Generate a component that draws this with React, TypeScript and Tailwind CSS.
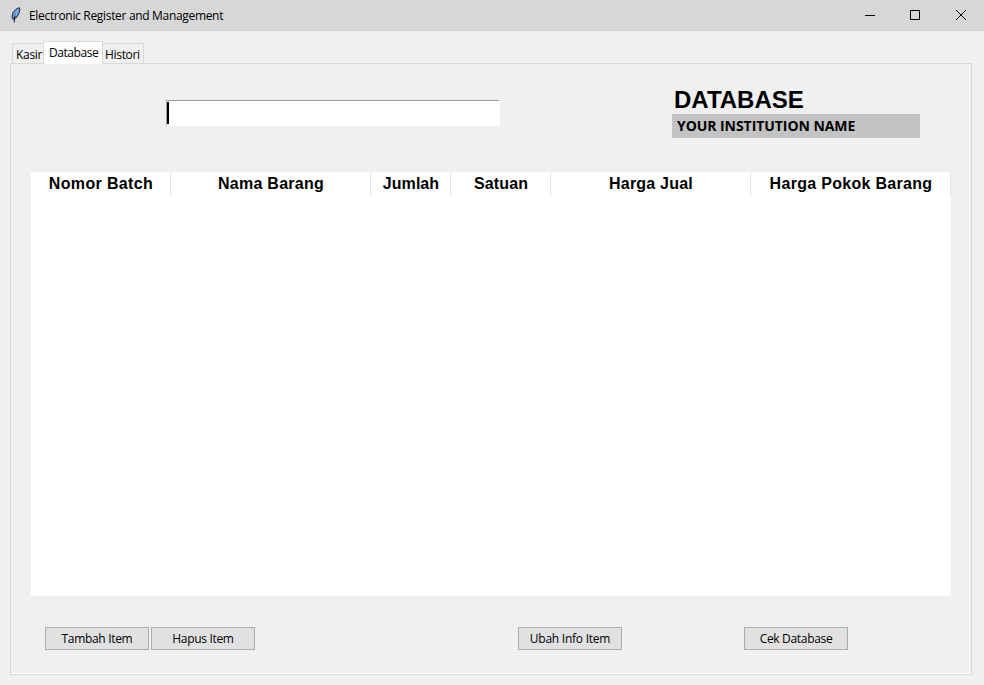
import React from "react";

const columns = [
  { label: "Nomor Batch", width: "w-[140px]", spacing: "tracking-[0.35px]" },
  { label: "Nama Barang", width: "w-[200px]", spacing: "tracking-[0.25px]" },
  { label: "Jumlah", width: "w-[80px]", spacing: "tracking-[0.05px]" },
  { label: "Satuan", width: "w-[100px]", spacing: "tracking-[0.15px]" },
  { label: "Harga Jual", width: "w-[200px]", spacing: "tracking-[0.2px]" },
  { label: "Harga Pokok Barang", width: "w-[200px]", spacing: "tracking-[0.3px]" },
];

function Feather() {
  return (
    <svg width="10" height="16" viewBox="0 0 10 16" className="mt-[7px] ml-[11px] shrink-0">
      <path d="M8.2 0.6 L5 2.2 L2.2 5.2 L1 9 L1.4 11.8 L3.2 12.3 L5.8 10.3 L7.9 6.5 L9 2.2 Z" fill="#5c96dc" stroke="#1a2530" strokeWidth="0.9" />
      <path d="M4.6 7.5 L3.2 12 L3.3 15.5" fill="none" stroke="#101418" strokeWidth="1" />
      <path d="M7.2 2.6 L5.4 6.4 L4.6 9" fill="none" stroke="#8fc0f5" strokeWidth="1.2" />
    </svg>
  );
}

function Button({ children, className = "" }: { children: React.ReactNode; className?: string }) {
  return (
    <button className={`h-[23px] w-[104px] shrink-0 border border-[#adadad] bg-[#e1e1e1] text-center leading-[22px] whitespace-nowrap ${className}`}>
      {children}
    </button>
  );
}

export default function App() {
  return (
    <div className="flex h-[685px] w-[984px] flex-col overflow-hidden bg-[#f0f0f0] font-['Open_Sans','Noto_Sans',sans-serif] text-[12px] tracking-[-0.32px] text-black">
      <header className="flex h-[31px] shrink-0 bg-[#d7d7d7]">
        <Feather />
        <span className="ml-[8px] leading-[32px] whitespace-nowrap">Electronic Register and Management</span>
        <svg width="138" height="31" viewBox="0 0 138 31" className="ml-auto" fill="none" stroke="#000" shapeRendering="crispEdges">
          <path d="M19 15.5H29" />
          <path d="M64.5 10.5h9v9h-9z" />
          <path d="M110 10l10 10M120 10l-10 10" shapeRendering="auto" />
        </svg>
      </header>

      <nav className="ml-[12px] flex h-[33px] shrink-0 items-end">
        <div className="h-[21px] w-[31px] border border-r-0 border-[#d9d9d9] pl-[3px] leading-[22px]">Kasir</div>
        <div className="z-10 h-[23px] w-[60px] border border-b-0 border-[#d9d9d9] bg-white pl-[5px] leading-[22px] tracking-[-0.45px]">Database</div>
        <div className="h-[21px] w-[41px] border border-l-0 border-[#d9d9d9] pl-[2px] leading-[22px]">Histori</div>
      </nav>

      <main className="-mt-px ml-[10px] flex h-[612px] w-[962px] shrink-0 flex-col border border-[#d9d9d9]">
        <section className="flex h-[108px] shrink-0 items-start">
          <div className="mt-[36px] ml-[155px] h-[26px] w-[334px] border border-t-[#a0a0a0] border-r-white border-b-white border-l-[#a0a0a0] bg-white pt-px">
            <div className="h-[22px] w-[2px] bg-black" />
          </div>
          <div className="mt-[22px] ml-[172px] w-[248px]">
            <h1 className="h-[28px] pl-[2px] font-['Liberation_Sans',sans-serif] text-[24px] leading-[28px] font-bold tracking-[0px]">DATABASE</h1>
            <div className="h-[24px] bg-[#c3c3c3] pl-[5px] text-[14px] leading-[24px] font-bold tracking-[-0.06px] whitespace-nowrap">YOUR INSTITUTION NAME</div>
          </div>
        </section>

        <section className="ml-[20px] h-[424px] w-[920px] shrink-0 bg-white">
          <div className="flex">
            {columns.map((c) => (
              <div key={c.label} className={`${c.width} ${c.spacing} h-[24px] border-r border-[#e5e5e5] pl-px text-center font-['Liberation_Sans',sans-serif] text-[16px] leading-[23px] font-bold whitespace-nowrap`}>
                {c.label}
              </div>
            ))}
          </div>
        </section>

        <section className="flex grow border-b border-white pt-[31px] pl-[34px]">
          <Button>Tambah Item</Button>
          <Button className="ml-[2px]">Hapus Item</Button>
          <Button className="ml-[263px] tracking-[-0.25px]">Ubah Info Item</Button>
          <Button className="ml-[122px]">Cek Database</Button>
        </section>
      </main>
    </div>
  );
}
